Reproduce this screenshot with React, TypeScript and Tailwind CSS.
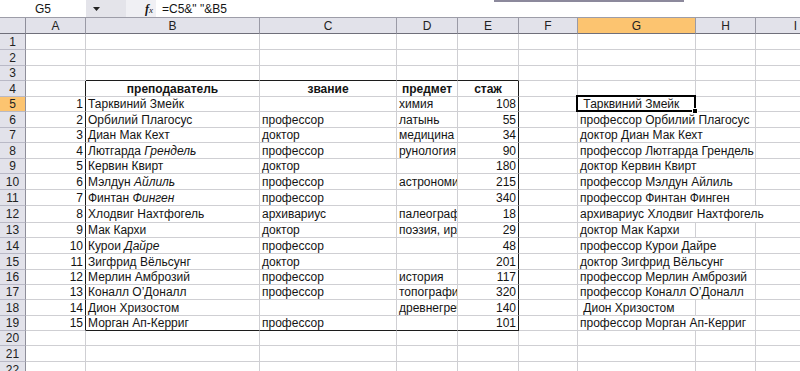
import React from 'react';

type Person = {
  first: string;
  last: string;
  italic?: boolean;
  title: string;
  subject: string;
  years: number;
};

// rows 5..19 of the sheet
const PEOPLE: Person[] = [
  { first: 'Тарквиний', last: 'Змейк', title: '', subject: 'химия', years: 108 },
  { first: 'Орбилий', last: 'Плагосус', title: 'профессор', subject: 'латынь', years: 55 },
  { first: 'Диан', last: 'Мак Кехт', title: 'доктор', subject: 'медицина', years: 34 },
  { first: 'Лютгарда', last: 'Грендель', italic: true, title: 'профессор', subject: 'рунология', years: 90 },
  { first: 'Кервин', last: 'Квирт', title: 'доктор', subject: '', years: 180 },
  { first: 'Мэлдун', last: 'Айлиль', italic: true, title: 'профессор', subject: 'астрономия', years: 215 },
  { first: 'Финтан', last: 'Финген', italic: true, title: 'профессор', subject: '', years: 340 },
  { first: 'Хлодвиг', last: 'Нахтфогель', title: 'архивариус', subject: 'палеография', years: 18 },
  { first: 'Мак', last: 'Кархи', title: 'доктор', subject: 'поэзия, ирландская литература', years: 29 },
  { first: 'Курои', last: 'Дайре', italic: true, title: 'профессор', subject: '', years: 48 },
  { first: 'Зигфрид', last: 'Вёльсунг', title: 'доктор', subject: '', years: 201 },
  { first: 'Мерлин', last: 'Амброзий', title: 'профессор', subject: 'история', years: 117 },
  { first: 'Коналл', last: 'О’Доналл', title: 'профессор', subject: 'топография', years: 320 },
  { first: 'Дион', last: 'Хризостом', title: '', subject: 'древнегреческий', years: 140 },
  { first: 'Морган', last: 'Ап-Керриг', title: 'профессор', subject: '', years: 101 },
];

const COLS = [
  { id: 'A', w: 'w-[60px]' },
  { id: 'B', w: 'w-[174px]' },
  { id: 'C', w: 'w-[137px]' },
  { id: 'D', w: 'w-[61px]' },
  { id: 'E', w: 'w-[61px]' },
  { id: 'F', w: 'w-[59px]' },
  { id: 'G', w: 'w-[118px]' },
  { id: 'H', w: 'w-[60px]' },
  { id: 'I', w: 'w-[80px]' },
];

// row heights, bottom gridline included
const HEIGHTS = [
  'h-[16px]', 'h-[16px]', 'h-[15px]', 'h-[16px]', 'h-[15px]', 'h-[16px]', 'h-[15px]', 'h-[16px]',
  'h-[15px]', 'h-[16px]', 'h-[16px]', 'h-[17px]', 'h-[15px]', 'h-[16px]', 'h-[16px]', 'h-[15px]',
  'h-[15px]', 'h-[16px]', 'h-[15px]', 'h-[15px]', 'h-[16px]', 'h-[16px]',
];

const inTable = (row: number) => row >= 4 && row <= 19;

function borders(col: string, row: number) {
  const right = (col === 'A' || col === 'E') && inTable(row) ? 'border-r-[#1c1c1c]' : 'border-r-[#cfcfd3]';
  const bottom =
    ['B', 'C', 'D', 'E'].includes(col) && (row === 3 || row === 19) ? 'border-b-[#1c1c1c]' : 'border-b-[#cfcfd3]';
  return `${right} ${bottom}`;
}

function content(col: string, row: number): React.ReactNode {
  if (row === 4) {
    const head: Record<string, string> = { B: 'преподаватель', C: 'звание', D: 'предмет', E: 'стаж' };
    if (!head[col]) return null;
    return <span className="w-full text-center font-bold">{head[col]}</span>;
  }
  if (row < 5 || row > 19) return null;
  const p = PEOPLE[row - 5];
  switch (col) {
    case 'A':
      return <span className="w-full text-right pr-[2px]">{row - 4}</span>;
    case 'B':
      return (
        <span className="pl-[2px] whitespace-nowrap">
          {p.first} {p.italic ? <i>{p.last}</i> : p.last}
        </span>
      );
    case 'C':
      return <span className="pl-[2px] whitespace-nowrap">{p.title}</span>;
    case 'D':
      return <span className="pl-[2px] whitespace-nowrap">{p.subject}</span>;
    case 'E':
      return <span className="w-full text-right pr-[2px]">{p.years}</span>;
    case 'G':
      return (
        <span className="relative z-10 h-full flex items-center bg-white pl-[2px] pr-[1px] whitespace-pre">
          {(p.title ? p.title : '') + ' ' + p.first + ' ' + p.last}
        </span>
      );
    default:
      return null;
  }
}

function SheetRow({ row }: { row: number }) {
  const selected = row === 5;
  return (
    <div className={`flex ${HEIGHTS[row - 1]}`}>
      <div
        className={`w-[26px] shrink-0 flex items-center justify-center border-r border-b border-r-[#8e8e9a] border-b-[#b9b9c6] text-[#222] ${
          selected ? 'bg-[#fcc470]' : 'bg-[#e2e2ea]'
        }`}
      >
        {row}
      </div>
      {COLS.map((c) => (
        <div
          key={c.id}
          className={`${c.w} shrink-0 relative flex items-center border-r border-b ${borders(c.id, row)} ${
            c.id === 'D' ? 'overflow-hidden' : ''
          }`}
        >
          {content(c.id, row)}
          {selected && c.id === 'G' && (
            <>
              <div className="absolute -left-[2px] -right-[1px] -top-[2px] -bottom-[1px] z-20 border-2 border-black" />
              <div className="absolute -right-[3px] -bottom-[3px] z-30 w-[6px] h-[6px] bg-black border border-white" />
            </>
          )}
        </div>
      ))}
    </div>
  );
}

function FormulaBar() {
  return (
    <div className="flex h-[18px] border-b border-[#9d9da8]">
      <div className="w-[86px] shrink-0 flex items-center justify-center">G5</div>
      <div className="w-[40px] shrink-0 flex items-center pl-[7px] bg-[#e4e4ea]">
        <svg width="7" height="4" viewBox="0 0 7 4">
          <path d="M0 0 H7 L3.5 4 Z" fill="#222" />
        </svg>
      </div>
      <div className="w-[30px] shrink-0 flex items-center justify-end pr-[3px] bg-[#f0f0f4]">
        <span className="font-['Liberation_Serif',serif] italic font-bold text-[12px]">f</span>
        <span className="font-['Liberation_Serif',serif] italic text-[9px] mt-[3px]">x</span>
      </div>
      <div className="flex-1 flex items-center pl-[6px]">=C5&amp;" "&amp;B5</div>
    </div>
  );
}

function ColumnHeaders() {
  return (
    <div className="flex h-[16px]">
      <div className="w-[26px] shrink-0 bg-[#e2e2ea] border-r border-b border-r-[#8e8e9a] border-b-[#6f6f7a]" />
      {COLS.map((c) => (
        <div
          key={c.id}
          className={`${c.w} shrink-0 flex items-center justify-center border-r border-b border-r-[#9a9aa6] border-b-[#6f6f7a] text-[#222] ${
            c.id === 'G' ? 'bg-[#fcc470]' : 'bg-[#e2e2ea]'
          }`}
        >
          {c.id}
        </div>
      ))}
    </div>
  );
}

export default function App() {
  const rows = Array.from({ length: 22 }, (_, i) => i + 1);
  return (
    <div className="relative w-[800px] h-[371px] overflow-hidden bg-white font-['Liberation_Sans',Arial,sans-serif] text-[12px] leading-[14px] text-[#141414]">
      <FormulaBar />
      <ColumnHeaders />
      {rows.map((r) => (
        <SheetRow key={r} row={r} />
      ))}
      <div className="absolute left-[494px] top-0 h-[2px] w-[190px] bg-[#8c899c]" />
    </div>
  );
}
